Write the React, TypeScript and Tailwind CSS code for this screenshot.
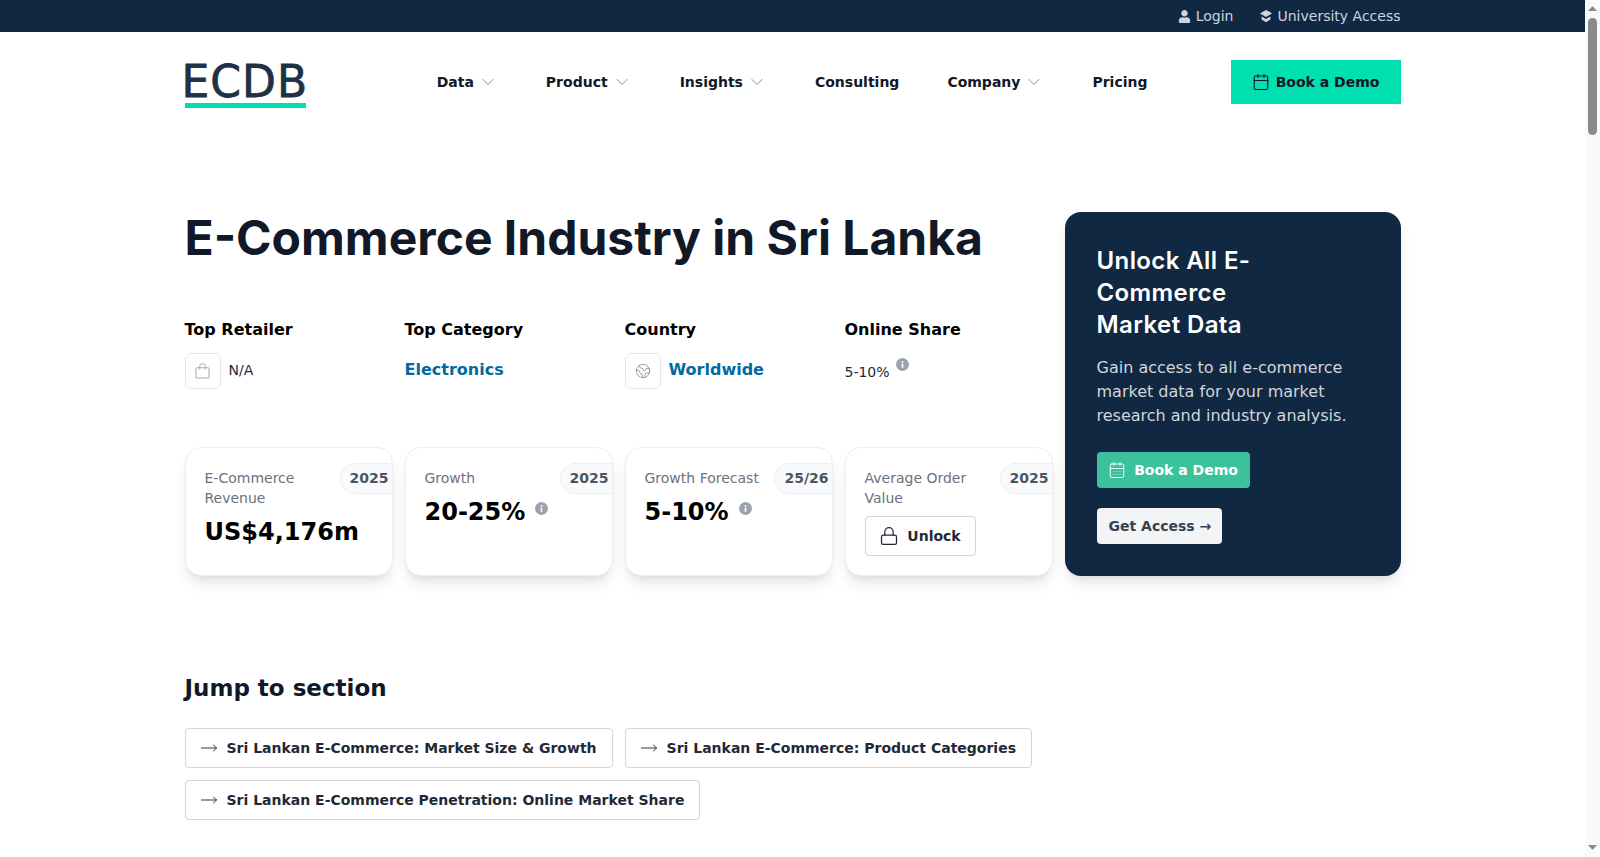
import React from 'react';
import { ChevronDown, Calendar, CalendarDays, Earth, Lock, MoveRight } from 'lucide-react';
import { FaUser } from 'react-icons/fa';

const InfoDot: React.FC<{ className?: string }> = ({ className = '' }) => (
  <svg viewBox="0 0 16 16" className={`w-[13px] h-[13px] ${className}`}>
    <circle cx="8" cy="8" r="8" fill="#9ca3af" />
    <rect x="7" y="7" width="2" height="5" fill="#fff" />
    <rect x="7" y="4" width="2" height="2" fill="#fff" />
  </svg>
);

const BagIcon = () => (
  <svg viewBox="0 0 16 17" className="w-[15px] h-[16px]" fill="none" stroke="#9ca3af" strokeWidth="1">
    <rect x="1" y="5" width="14" height="11" rx="1" />
    <path d="M5 7V3.5a3 3 0 0 1 6 0V7" />
  </svg>
);

const CapIcon = () => (
  <svg viewBox="0 0 16 16" className="w-[14px] h-[14px]" fill="currentColor">
    <path d="M8 1 15 5 8 9 1 5z" />
    <path d="M3 8.5 8 11.5 13 8.5V12L8 15 3 12z" />
  </svg>
);

const NavItem: React.FC<{ label: string; caret?: boolean }> = ({ label, caret }) => (
  <a className="flex items-center text-[14px] font-bold text-[#111827]">
    {label}
    {caret && <ChevronDown size={20} strokeWidth={1} className="ml-[4px] text-[#6b7280]" />}
  </a>
);

const StatCard: React.FC<{ label: string; badge: string; value?: string; info?: boolean; unlock?: boolean }> = ({ label, badge, value, info, unlock }) => (
  <div className="relative h-[129px] w-[208px] rounded-2xl border border-[#eceef1] bg-white pl-[19px] pt-[20px] shadow-lg">
    <div className="absolute right-0 top-[15px] flex h-[31px] items-center rounded-l-full border border-r-0 border-[#eceef1] bg-gray-50 pl-[9px] pr-[3px] text-[14px] font-bold text-[#4b5563]">{badge}</div>
    <p className="w-[115px] text-[14px] leading-[20px] text-[#6b7280]">{label}</p>
    {value && (
      <div className="mt-[8px] flex items-start">
        <span className="text-[24px] font-bold leading-[32px] text-black">{value}</span>
        {info && <InfoDot className="ml-[10px] mt-[6px]" />}
      </div>
    )}
    {unlock && (
      <button className="mt-[8px] flex h-[40px] w-[111px] items-center justify-center gap-[8px] rounded border border-gray-300 bg-white text-[14px] font-bold text-[#1f2937]">
        <Lock size={20} strokeWidth={1.5} /> Unlock
      </button>
    )}
  </div>
);

const JumpLink: React.FC<{ label: string }> = ({ label }) => (
  <a className="flex h-[40px] items-center gap-[9px] rounded border border-gray-300 bg-white pl-[14px] pr-[15px] text-[14px] font-bold text-[#1f2937]">
    <MoveRight size={18} strokeWidth={1.25} className="text-[#1f2937]" />
    {label}
  </a>
);

export default function App() {
  return (
    <div className="flex h-screen overflow-hidden bg-white font-['DejaVu_Sans',sans-serif]">
      <div className="min-w-0 flex-1">
        <div className="h-[32px] bg-[#112843]">
          <div className="mx-auto flex h-full w-[1216px] items-center justify-end gap-[25px] text-[14px] text-[#cbd5e1]">
            <a className="flex items-center gap-[5px]"><FaUser size={13} /> Login</a>
            <a className="flex items-center gap-[5px]"><CapIcon /> University Access</a>
          </div>
        </div>

        <header className="mx-auto flex h-[100px] w-[1216px] items-center">
          <div className="mt-[8px] flex w-[121px] flex-col">
            <span className="-ml-[3px] whitespace-nowrap pt-[1px] text-[44px] font-normal leading-[33px] tracking-[1px] text-[#1f3145] [-webkit-text-stroke:0.8px_#1f3145]">ECDB</span>
            <span className="mt-[5px] h-[5px] bg-[#00dfb0]" />
          </div>
          <nav className="ml-auto mr-[83px] flex items-center gap-[48px]">
            <NavItem label="Data" caret />
            <NavItem label="Product" caret />
            <NavItem label="Insights" caret />
            <NavItem label="Consulting" />
            <NavItem label="Company" caret />
            <NavItem label="Pricing" />
          </nav>
          <button className="flex h-[44px] w-[170px] items-center justify-center gap-[6px] bg-[#00dfb0] text-[14px] font-bold text-[#111827]">
            <Calendar size={18} strokeWidth={1.5} /> Book a Demo
          </button>
        </header>

        <main className="mx-auto mt-[80px] flex w-[1216px] justify-between">
          <div className="w-[868px]">
            <h1 className="font-['Inter',sans-serif] text-[48px] font-bold leading-[52px] text-[#111827]">E-Commerce Industry in Sri Lanka</h1>
            <div className="mt-[54px] grid h-[129px] grid-cols-4 gap-[12px]">
              <div>
                <p className="text-[16px] font-bold leading-[24px] text-black">Top Retailer</p>
                <div className="mt-[11px] flex items-center gap-[8px]">
                  <span className="flex h-[36px] w-[36px] items-center justify-center rounded-md border border-gray-200"><BagIcon /></span>
                  <span className="mb-[2px] text-[14px] text-[#1f2937]">N/A</span>
                </div>
              </div>
              <div>
                <p className="text-[16px] font-bold leading-[24px] text-black">Top Category</p>
                <p className="mt-[16px] text-[16px] font-bold leading-[24px] text-[#0369a1]">Electronics</p>
              </div>
              <div>
                <p className="text-[16px] font-bold leading-[24px] text-black">Country</p>
                <div className="mt-[11px] flex items-center gap-[8px]">
                  <span className="flex h-[36px] w-[36px] items-center justify-center rounded-md border border-gray-200"><Earth size={16} strokeWidth={1} className="text-[#6b7280]" /></span>
                  <span className="mb-[2px] text-[16px] font-bold text-[#0369a1]">Worldwide</span>
                </div>
              </div>
              <div>
                <p className="text-[16px] font-bold leading-[24px] text-black">Online Share</p>
                <div className="mt-[16px] flex items-start">
                  <span className="mt-[4px] text-[14px] leading-[20px] text-[#1f2937]">5-10%</span>
                  <InfoDot className="ml-[6px]" />
                </div>
              </div>
            </div>
            <div className="flex gap-[12px]">
              <StatCard label="E-Commerce Revenue" badge="2025" value="US$4,176m" />
              <StatCard label="Growth" badge="2025" value="20-25%" info />
              <StatCard label="Growth Forecast" badge="25/26" value="5-10%" info />
              <StatCard label="Average Order Value" badge="2025" unlock />
            </div>
          </div>

          <aside className="h-[364px] w-[336px] rounded-2xl bg-[#112843] px-[32px] pt-[33px] shadow-lg">
            <h2 className="font-['Inter',sans-serif] text-[24px] font-semibold leading-[32px] tracking-[0.4px] text-white">Unlock All E-<br />Commerce<br />Market Data</h2>
            <p className="mt-[15px] text-[16px] leading-[24px] text-[#d1d5db]">Gain access to all e-commerce market data for your market research and industry analysis.</p>
            <button className="mt-[24px] flex h-[36px] w-[153px] items-center justify-center gap-[8px] rounded bg-[#3bc19c] text-[14px] font-bold text-white">
              <CalendarDays size={18} strokeWidth={1.25} /> Book a Demo
            </button>
            <button className="mt-[20px] flex h-[36px] w-[125px] items-center rounded bg-gray-100 pl-[12px] text-[14px] font-bold text-[#374151]">Get Access →</button>
          </aside>
        </main>

        <section className="mx-auto mt-[96px] w-[1216px]">
          <h2 className="text-[23px] font-bold leading-[32px] text-[#111827]">Jump to section</h2>
          <div className="mt-[24px] flex w-[868px] flex-wrap gap-[12px]">
            <JumpLink label="Sri Lankan E-Commerce: Market Size & Growth" />
            <JumpLink label="Sri Lankan E-Commerce: Product Categories" />
            <JumpLink label="Sri Lankan E-Commerce Penetration: Online Market Share" />
          </div>
        </section>
      </div>

      {/* scrollbar doesn't render in the headless shot, so it is drawn */}
      <div className="flex w-[15px] shrink-0 flex-col items-center bg-[#fafafa]">
        <svg viewBox="0 0 15 15" className="h-[15px] w-[15px] shrink-0"><path d="M7.5 6 12 11H3z" fill="#8a8a8a" /></svg>
        <div className="mt-[3px] h-[117px] w-[9px] rounded-full bg-[#8a8a8a]" />
        <svg viewBox="0 0 15 15" className="mt-auto h-[15px] w-[15px] shrink-0"><path d="M7.5 8 12 3H3z" fill="#8a8a8a" /></svg>
      </div>
    </div>
  );
}
